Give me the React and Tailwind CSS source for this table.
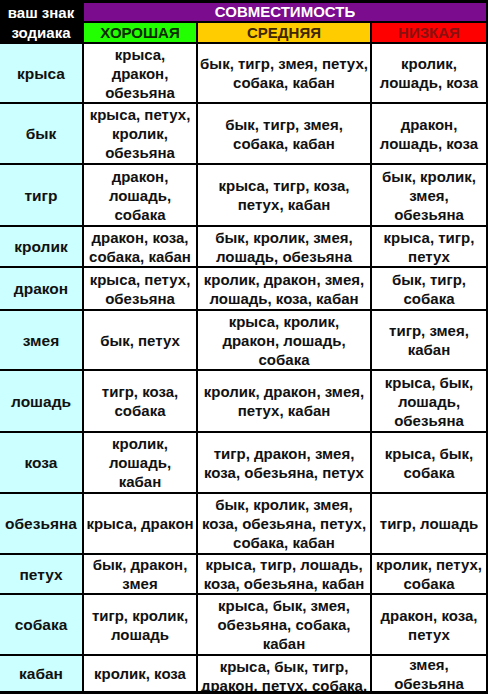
// Таблица совместимости знаков зодиака
const ROWS = [
  ['крыса', ['крыса,', 'дракон,', 'обезьяна'], ['бык, тигр, змея, петух,', 'собака, кабан'], ['кролик,', 'лошадь, коза']],
  ['бык', ['крыса, петух,', 'кролик,', 'обезьяна'], ['бык, тигр, змея,', 'собака, кабан'], ['дракон,', 'лошадь, коза']],
  ['тигр', ['дракон,', 'лошадь,', 'собака'], ['крыса, тигр, коза,', 'петух, кабан'], ['бык, кролик,', 'змея,', 'обезьяна']],
  ['кролик', ['дракон, коза,', 'собака, кабан'], ['бык, кролик, змея,', 'лошадь, обезьяна'], ['крыса, тигр,', 'петух']],
  ['дракон', ['крыса, петух,', 'обезьяна'], ['кролик, дракон, змея,', 'лошадь, коза, кабан'], ['бык, тигр,', 'собака']],
  ['змея', ['бык, петух'], ['крыса, кролик,', 'дракон, лошадь,', 'собака'], ['тигр, змея,', 'кабан']],
  ['лошадь', ['тигр, коза,', 'собака'], ['кролик, дракон, змея,', 'петух, кабан'], ['крыса, бык,', 'лошадь,', 'обезьяна']],
  ['коза', ['кролик,', 'лошадь,', 'кабан'], ['тигр, дракон, змея,', 'коза, обезьяна, петух'], ['крыса, бык,', 'собака']],
  ['обезьяна', ['крыса, дракон'], ['бык, кролик, змея,', 'коза, обезьяна, петух,', 'собака, кабан'], ['тигр, лошадь']],
  ['петух', ['бык, дракон,', 'змея'], ['крыса, тигр, лошадь,', 'коза, обезьяна, кабан'], ['кролик, петух,', 'собака']],
  ['собака', ['тигр, кролик,', 'лошадь'], ['крыса, бык, змея,', 'обезьяна, собака,', 'кабан'], ['дракон, коза,', 'петух']],
  ['кабан', ['кролик, коза'], ['крыса, бык, тигр,', 'дракон, петух, собака,', 'кабан'], ['змея,', 'обезьяна']],
];

function Lines({ lines }) {
  return lines.map((l, i) => <div key={i} className="whitespace-nowrap">{l}</div>);
}

function Cell({ lines, sign, top }) {
  return (
    <div
      className={
        'flex flex-col items-center overflow-hidden text-center ' +
        (top ? 'justify-start pt-[1px] ' : 'justify-center ') +
        (sign ? 'bg-[#ccffff] text-[15.5px]' : 'bg-white')
      }
    >
      <Lines lines={lines} />
    </div>
  );
}

export default function App() {
  return (
    <div className="w-[488px] h-[694px] overflow-hidden bg-black font-['Liberation_Sans',Arial,sans-serif] font-bold">
      <div className="grid grid-cols-[82px_112px_172px_114px] grid-rows-[18px_19px_58px_59px_60px_39px_41px_58px_60px_59px_59px_38px_59px_35px] gap-[2px] pt-[3px] pr-[2px] pb-[3px] text-[15px] leading-[19px] text-[#111]">
        {/* Шапка */}
        <div className="row-span-2 flex flex-col items-center justify-center bg-black text-[15px] leading-[20px] text-white">
          <div>ваш знак</div>
          <div>зодиака</div>
        </div>
        <div className="col-span-3 flex items-center justify-center bg-[#7b0c8e] text-[15px] leading-[18px] text-white">
          СОВМЕСТИМОСТЬ
        </div>
        <div className="flex items-center justify-center bg-[#22ff00] text-[15px] text-[#0d2a00]">ХОРОШАЯ</div>
        <div className="flex items-center justify-center bg-[#ffcc00] text-[15px] text-[#3d2600]">СРЕДНЯЯ</div>
        <div className="flex items-center justify-center bg-[#ff0000] text-[15px] text-[#8a1010]">НИЗКАЯ</div>

        {/* Строки */}
        {ROWS.map(([sign, good, mid, low], i) => {
          const last = i === ROWS.length - 1;
          return [
            <Cell key={sign + 's'} lines={[sign]} sign />,
            <Cell key={sign + 'g'} lines={good} />,
            <Cell key={sign + 'm'} lines={mid} top={last} />,
            <Cell key={sign + 'l'} lines={low} />,
          ];
        })}
      </div>
    </div>
  );
}
